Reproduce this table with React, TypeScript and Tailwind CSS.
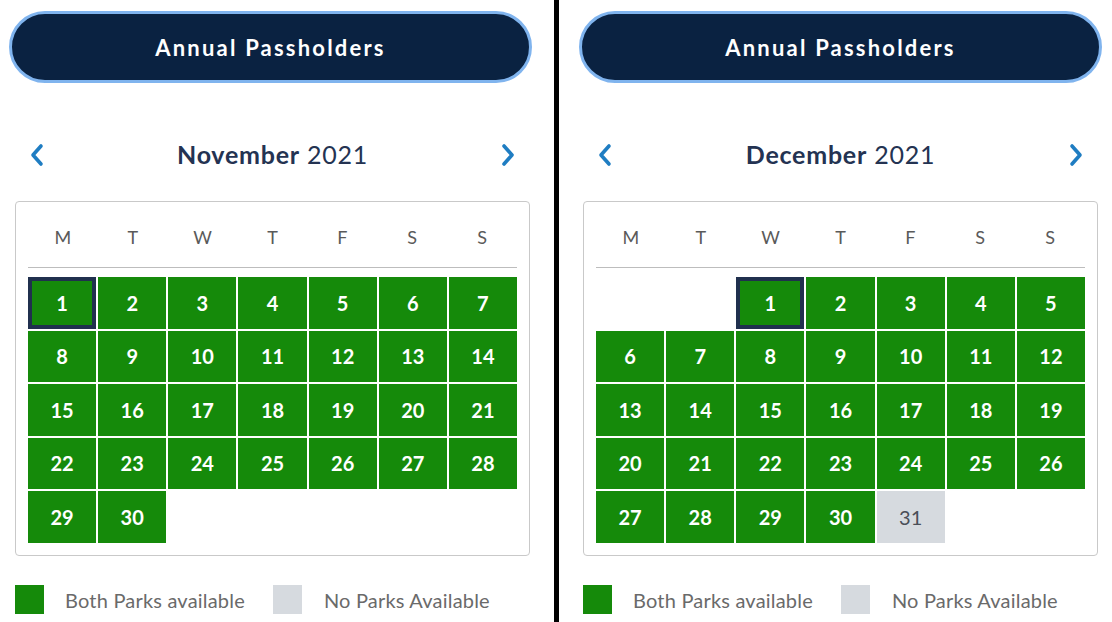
import React from 'react';

type Day = { n: number; status: 'both' | 'none'; selected?: boolean } | null;

const font = { fontFamily: 'Lato, "Open Sans", sans-serif' };

function build(offset: number, total: number, noneFrom: number): Day[] {
  const cells: Day[] = [];
  for (let i = 0; i < offset; i++) cells.push(null);
  for (let d = 1; d <= total; d++) cells.push({ n: d, status: d >= noneFrom ? 'none' : 'both', selected: d === 1 });
  while (cells.length < 35) cells.push(null);
  return cells;
}

function Chevron({ dir }: { dir: 'left' | 'right' }) {
  return (
    <svg width="16" height="24" viewBox="0 0 16 24" fill="none">
      <polyline
        points={dir === 'left' ? '12,3 4,12 12,21' : '4,3 12,12 4,21'}
        stroke="#1f7dc2"
        strokeWidth="3.6"
        strokeLinecap="round"
        strokeLinejoin="round"
      />
    </svg>
  );
}

function Calendar({ month, cells, pad, inner }: { month: string; cells: Day[]; pad: string; inner: string }) {
  return (
    <div className={`w-[554px] shrink-0 pt-[11px] ${pad}`} style={font}>
      <div className="h-[72px] w-[523px] rounded-full bg-[#0a2241] border-[3px] border-[#80b4ee] flex items-center justify-center text-white text-[22px] font-bold tracking-[0.1em]">
        Annual Passholders
      </div>

      <div className={inner}>
        {/* month nav */}
        <div className="mt-[56px] w-[515px] h-[32px] flex items-center justify-between px-[14px]">
          <Chevron dir="left" />
          <div className="text-[25px] tracking-[0.03em] text-[#243352]">
            <span className="font-bold">{month}</span> 2021
          </div>
          <Chevron dir="right" />
        </div>

        {/* calendar box */}
        <div className="mt-[30px] w-[515px] border border-[#c9c9c9] rounded-[4px] px-[12px] pt-[22px] pb-[12px]">
          <div className="grid grid-cols-7 text-center text-[18px] leading-[26px] text-[#5a5a5a] pb-[17px] border-b border-[#bdbdbd]">
            {['M', 'T', 'W', 'T', 'F', 'S', 'S'].map((d, i) => (
              <div key={i}>{d}</div>
            ))}
          </div>
          <div className="mt-[9px] grid grid-cols-7 gap-[2px] auto-rows-[51.5px]">
            {cells.map((c, i) =>
              c === null ? (
                <div key={i} />
              ) : c.status === 'none' ? (
                <div key={i} className="bg-[#d6dadf] flex items-center justify-center text-[20px] text-[#4a4f58]">
                  {c.n}
                </div>
              ) : (
                <div
                  key={i}
                  className={
                    c.selected
                      ? 'bg-[#158a0a] border-[4px] border-[#20304e] flex items-center justify-center text-[20px] font-bold text-white'
                      : 'bg-[#158a0a] flex items-center justify-center text-[20px] font-bold text-white'
                  }
                >
                  {c.n}
                </div>
              )
            )}
          </div>
        </div>

        {/* legend */}
        <div className="mt-[29px] flex items-center gap-[28px] text-[20px] tracking-[0.01em] text-[#6a6a6a]">
          <div className="flex items-center gap-[21px]">
            <span className="w-[29px] h-[29px] bg-[#158a0a]" />
            <span>Both Parks available</span>
          </div>
          <div className="flex items-center gap-[22px]">
            <span className="w-[29px] h-[29px] bg-[#d6dadf]" />
            <span>No Parks Available</span>
          </div>
        </div>
      </div>
    </div>
  );
}

export default function App() {
  return (
    <div className="w-[1112px] h-[622px] bg-white flex overflow-hidden">
      <Calendar month="November" cells={build(0, 30, 99)} pad="pl-[9px] w-[553px]" inner="ml-[6px]" />
      <div className="w-[5px] shrink-0 bg-black" />
      <Calendar month="December" cells={build(2, 31, 31)} pad="pl-[20px]" inner="ml-[4px]" />
    </div>
  );
}
